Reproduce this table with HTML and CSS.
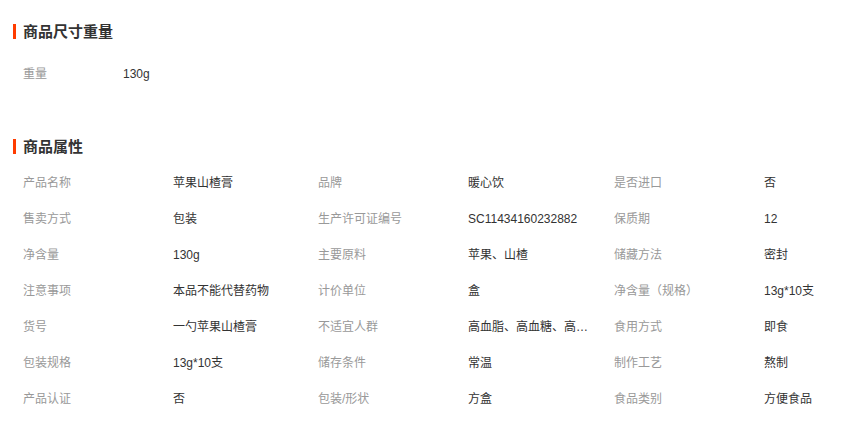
FILE: index.html
```html
<!DOCTYPE html>
<html lang="zh-CN">
<head>
<meta charset="utf-8">
<title>商品属性</title>
<link rel="stylesheet" href="styles.css">
</head>
<body>
<section class="block">
  <h2 class="title">商品尺寸重量</h2>
  <div class="weight-row">
    <span class="label w-label">重量</span>
    <span class="value">130g</span>
  </div>
</section>
<section class="block attrs-block">
  <h2 class="title">商品属性</h2>
  <div class="attrs">
    <span class="label">产品名称</span><span class="value">苹果山楂膏</span>
    <span class="label">品牌</span><span class="value">暖心饮</span>
    <span class="label">是否进口</span><span class="value">否</span>

    <span class="label">售卖方式</span><span class="value">包装</span>
    <span class="label">生产许可证编号</span><span class="value">SC11434160232882</span>
    <span class="label">保质期</span><span class="value">12</span>

    <span class="label">净含量</span><span class="value">130g</span>
    <span class="label">主要原料</span><span class="value">苹果、山楂</span>
    <span class="label">储藏方法</span><span class="value">密封</span>

    <span class="label">注意事项</span><span class="value">本品不能代替药物</span>
    <span class="label">计价单位</span><span class="value">盒</span>
    <span class="label">净含量（规格）</span><span class="value">13g*10支</span>

    <span class="label">货号</span><span class="value">一勺苹果山楂膏</span>
    <span class="label">不适宜人群</span><span class="value">高血脂、高血糖、高血压人群</span>
    <span class="label">食用方式</span><span class="value">即食</span>

    <span class="label">包装规格</span><span class="value">13g*10支</span>
    <span class="label">储存条件</span><span class="value">常温</span>
    <span class="label">制作工艺</span><span class="value">熬制</span>

    <span class="label">产品认证</span><span class="value">否</span>
    <span class="label">包装/形状</span><span class="value">方盒</span>
    <span class="label">食品类别</span><span class="value">方便食品</span>
  </div>
</section>
</body>
</html>
```
FILE: styles.css
```css
html, body {
  margin: 0;
  padding: 0;
  background: #fff;
}
body {
  font-family: "Liberation Sans", "Noto Sans CJK SC", sans-serif;
  font-size: 12px;
  color: #333;
}
.block {
  padding-top: 21px;
}
.attrs-block {
  padding-top: 44px;
}
.title {
  margin: 3px 0 3px 13px;
  padding-left: 7px;
  border-left: 3px solid #ff3c00;
  height: 15px;
  line-height: 15px;
  font-size: 15px;
  font-weight: bold;
  color: #333;
}
.weight-row {
  margin-top: 17px;
  padding-left: 23px;
  display: flex;
  height: 36px;
  line-height: 36px;
}
.w-label {
  width: 100px;
}
.label {
  color: #999;
  white-space: nowrap;
}
.value {
  color: #333;
  white-space: nowrap;
  overflow: hidden;
  text-overflow: ellipsis;
  max-width: 126px;
}
.attrs {
  margin-top: 11px;
  padding-left: 23px;
  display: grid;
  grid-template-columns: 150px 145px 150px 146px 150px 1fr;
  grid-auto-rows: 36px;
  line-height: 36px;
}
```
